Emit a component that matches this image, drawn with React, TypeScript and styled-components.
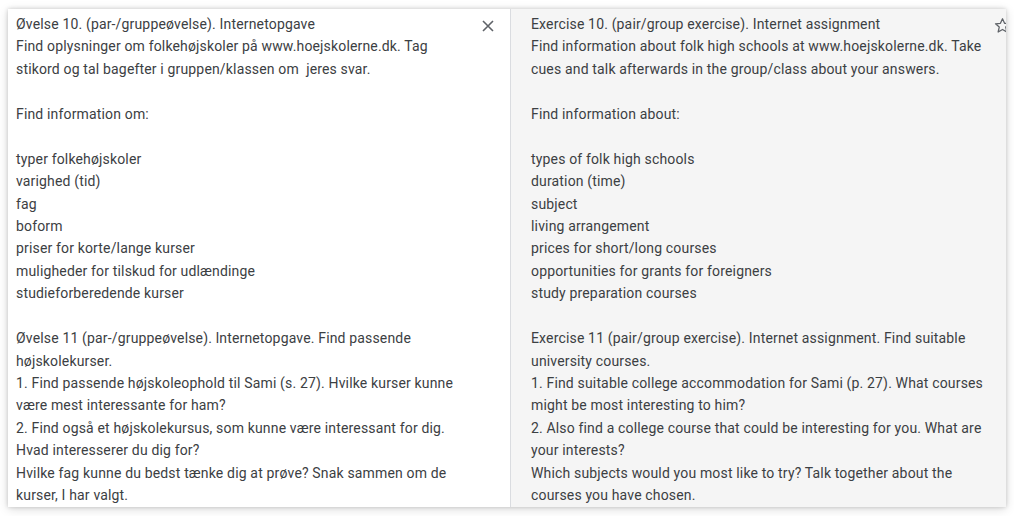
import * as React from 'react'
import styled, { createGlobalStyle } from 'styled-components'

const GlobalStyle = createGlobalStyle`
  html, body {
    margin: 0;
    padding: 0;
    background: #fff;
  }
  body {
    font-family: Roboto, "Liberation Sans", Arial, sans-serif;
  }
`

const sourceLines = [
  'Øvelse 10. (par-/gruppeøvelse). Internetopgave',
  'Find oplysninger om folkehøjskoler på www.hoejskolerne.dk. Tag',
  'stikord og tal bagefter i gruppen/klassen om  jeres svar.',
  '',
  'Find information om:',
  '',
  'typer folkehøjskoler',
  'varighed (tid)',
  'fag',
  'boform',
  'priser for korte/lange kurser',
  'muligheder for tilskud for udlændinge',
  'studieforberedende kurser',
  '',
  'Øvelse 11 (par-/gruppeøvelse). lnternetopgave. Find passende',
  'højskolekurser.',
  '1. Find passende højskoleophold til Sami (s. 27). Hvilke kurser kunne',
  'være mest interessante for ham?',
  '2. Find også et højskolekursus, som kunne være interessant for dig.',
  'Hvad interesserer du dig for?',
  'Hvilke fag kunne du bedst tænke dig at prøve? Snak sammen om de',
  'kurser, I har valgt.',
]

const targetLines = [
  'Exercise 10. (pair/group exercise). Internet assignment',
  'Find information about folk high schools at www.hoejskolerne.dk. Take',
  'cues and talk afterwards in the group/class about your answers.',
  '',
  'Find information about:',
  '',
  'types of folk high schools',
  'duration (time)',
  'subject',
  'living arrangement',
  'prices for short/long courses',
  'opportunities for grants for foreigners',
  'study preparation courses',
  '',
  'Exercise 11 (pair/group exercise). Internet assignment. Find suitable',
  'university courses.',
  '1. Find suitable college accommodation for Sami (p. 27). What courses',
  'might be most interesting to him?',
  '2. Also find a college course that could be interesting for you. What are',
  'your interests?',
  'Which subjects would you most like to try? Talk together about the',
  'courses you have chosen.',
]

const Card = styled.div`
  position: relative;
  margin: 9px 8px;
  height: 498px;
  display: grid;
  grid-template-columns: 502px 1fr;
  background: #fff;
  box-shadow: 0 0 4px rgba(0, 0, 0, 0.18), 0 2px 10px rgba(0, 0, 0, 0.14);
  overflow: hidden;
`

const Panel = styled.div<{ $target?: boolean }>`
  position: relative;
  padding: 4px 0 0 ${p => (p.$target ? '20px' : '8px')};
  background: ${p => (p.$target ? '#f5f5f5' : '#fff')};
  border-left: ${p => (p.$target ? '1px solid #dadce0' : 'none')};
  overflow: hidden;
`

const Line = styled.div`
  font-size: 14px;
  line-height: 22.45px;
  height: 22.45px;
  letter-spacing: 0.16px;
  color: #3c4043;
  white-space: pre;
`

const IconButton = styled.button<{ $right: number; $top: number }>`
  position: absolute;
  top: ${p => p.$top}px;
  right: ${p => p.$right}px;
  width: 28px;
  height: 28px;
  padding: 0;
  border: none;
  background: transparent;
  display: flex;
  align-items: center;
  justify-content: center;
  color: #5f6368;
`

const CloseIcon = () => (
  <svg width="14" height="14" viewBox="0 0 14 14">
    <path d="M2 2 L12 12 M12 2 L2 12" stroke="currentColor" strokeWidth="1.6" fill="none" />
  </svg>
)

const StarIcon = () => (
  <svg width="19" height="19" viewBox="0 0 24 24">
    <path
      d="M12 3.5 L14.6 9.2 L20.8 9.8 L16.1 14 L17.5 20.2 L12 17 L6.5 20.2 L7.9 14 L3.2 9.8 L9.4 9.2 Z"
      stroke="currentColor"
      strokeWidth="1.6"
      strokeLinejoin="round"
      fill="none"
    />
  </svg>
)

const App: React.FC = () => (
  <>
    <GlobalStyle />
    <Card>
      <Panel>
        {sourceLines.map((l, i) => (
          <Line key={i}>{l || ' '}</Line>
        ))}
        <IconButton $right={8} $top={3} aria-label="Close">
          <CloseIcon />
        </IconButton>
      </Panel>
      <Panel $target>
        {targetLines.map((l, i) => (
          <Line key={i}>{l || ' '}</Line>
        ))}
        <IconButton $right={-10} $top={2} aria-label="Save">
          <StarIcon />
        </IconButton>
      </Panel>
    </Card>
  </>
)

export default App
